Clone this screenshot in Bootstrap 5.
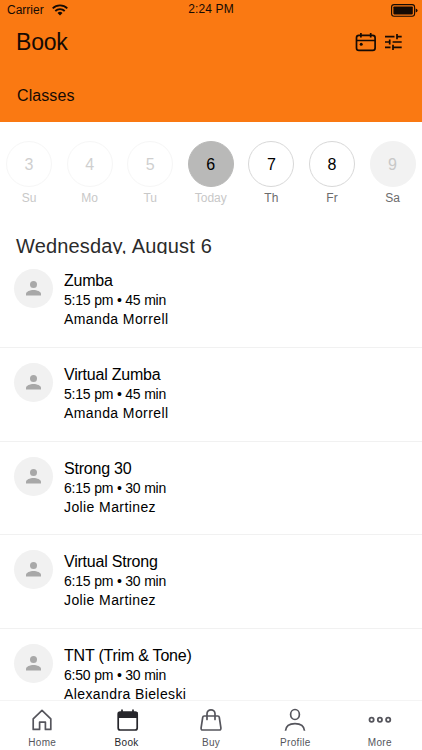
<!DOCTYPE html>
<html lang="en">
<head>
<meta charset="utf-8">
<meta name="viewport" content="width=device-width, initial-scale=1">
<title>Book</title>
<link href="https://cdn.jsdelivr.net/npm/bootstrap@5.3.0/dist/css/bootstrap.min.css" rel="stylesheet">
<style>
body{font-family:"Liberation Sans",Arial,sans-serif;color:#000;background:#fff}
svg{display:block;flex:none}
.screen{height:750px}
.top-area{height:122px;background:#fa7912;color:#140a04}
.status-bar{height:20px;display:grid;grid-template-columns:1fr auto 1fr;font-size:12px;line-height:20px;padding:0 4px 0 7px}
.clock{margin:-1px 3px 0 0;letter-spacing:.12px}
.app-title{font-size:23px;line-height:28px;letter-spacing:-.2px;padding-left:16px}
.head-icons{padding-right:3px}
.tab-title{font-size:16px;line-height:20px;padding:30px 0 0 17px;letter-spacing:.08px}
.days{display:grid;grid-template-columns:repeat(7,60.6px);padding:19px 0 0 .4px;margin-left:-1.7px;height:110px}
.day-num{width:46px;height:46px;border:1px solid #d8d8d8;font-size:16px;padding-top:1px}
.day-label{font-size:12px;line-height:14px;margin-top:4px;color:#6c6c6c}
.off .day-num{color:#cfcfcf;border-color:#f6f6f6}
.off .day-label,.today .day-label{color:#c8c8c8}
.today .day-num{background:#b9b9b8;border-color:#b9b9b8}
.closed .day-num{background:#f2f2f2;border-color:#f2f2f2;color:#c8c8c8}
.date-head{height:22px;padding-left:16px;font-size:20px;line-height:29px;letter-spacing:.17px;color:#2b2b2b}
.class-row{height:93.75px;flex:none;padding:15px 14px 0;border-bottom:1px solid #f1f1f1}
.avatar{width:39px;height:39px;background:#f1f1f1}
.class-text{margin:2px 0 0 11px}
.class-name{font-size:16px;line-height:20px;letter-spacing:-.22px}
.class-meta{font-size:14px;line-height:19px;letter-spacing:-.2px}
.class-staff{font-size:14px;line-height:19px;letter-spacing:.4px}
.tab-bar{height:50px;border-top:1px solid #f4f4f4;display:grid;grid-template-columns:repeat(5,1fr);color:#55555c;background:#fff}
.tab-item{font-size:10px;line-height:12px;letter-spacing:.32px;padding-top:7px}
.tab-item span{margin-top:5px}
.tab-item.current{color:#26262b}
</style>
<script src="https://cdn.jsdelivr.net/npm/bootstrap@5.3.0/dist/js/bootstrap.bundle.min.js"></script>
</head>
<body>
<div class="screen d-flex flex-column overflow-hidden">
<header class="top-area flex-shrink-0">
  <div class="status-bar">
    <div class="d-flex align-items-center"><span>Carrier</span>
      <svg class="ms-2" width="16" height="12" viewBox="0 0 16 12" fill="none" stroke="#140a04" stroke-width="1.8"><path d="M.7 4.3a10.4 10.4 0 0 1 14.6 0M3.3 7a6.7 6.7 0 0 1 9.4 0"/><path d="M8 11.5 5.5 9a3.6 3.6 0 0 1 5 0z" fill="#140a04" stroke="none"/></svg>
    </div>
    <div class="clock">2:24 PM</div>
    <svg class="ms-auto align-self-center" width="27" height="13" viewBox="0 0 27 13"><rect x=".6" y=".6" width="23" height="11.6" rx="2.5" fill="none" stroke="#140a04" stroke-width="1.1"/><rect x="2.4" y="2.4" width="19.4" height="8" rx=".8" fill="#140a04"/><path d="M24.7 4.4q1.9.4 1.9 2t-1.9 2z" fill="#140a04"/></svg>
  </div>
  <div class="d-flex align-items-center justify-content-between pe-3 pt-2">
    <h1 class="app-title fw-normal m-0">Book</h1>
    <div class="head-icons d-flex align-items-center">
      <svg width="22" height="20" viewBox="0 0 22 20" fill="none" stroke="#140a04" stroke-width="1.7"><rect x="1.5" y="3.3" width="18.6" height="15" rx="2.4"/><path d="M1.5 8.5h18.6M5.9 1v4.5M15.7 1v4.5"/><circle cx="6.2" cy="12.2" r="1.5" fill="#140a04" stroke="none"/></svg>
      <svg class="ms-2" width="18" height="18" viewBox="0 0 18 18" fill="none" stroke="#140a04" stroke-width="1.7"><path d="M0 3.6h9.5M11.7 3.6h5M12 1v5.2M0 9h4.8M7.6 9h9.1M4.7 6.4v5.2M0 14.4h5.5M8 14.4h8.7M8 11.8V17"/></svg>
    </div>
  </div>
  <div class="tab-title">Classes</div>
</header>
<section class="days flex-shrink-0 text-center">
  <div class="off"><div class="day-num rounded-circle d-flex align-items-center justify-content-center mx-auto">3</div><div class="day-label">Su</div></div>
  <div class="off"><div class="day-num rounded-circle d-flex align-items-center justify-content-center mx-auto">4</div><div class="day-label">Mo</div></div>
  <div class="off"><div class="day-num rounded-circle d-flex align-items-center justify-content-center mx-auto">5</div><div class="day-label">Tu</div></div>
  <div class="today"><div class="day-num rounded-circle d-flex align-items-center justify-content-center mx-auto">6</div><div class="day-label">Today</div></div>
  <div><div class="day-num rounded-circle d-flex align-items-center justify-content-center mx-auto">7</div><div class="day-label">Th</div></div>
  <div><div class="day-num rounded-circle d-flex align-items-center justify-content-center mx-auto">8</div><div class="day-label">Fr</div></div>
  <div class="closed"><div class="day-num rounded-circle d-flex align-items-center justify-content-center mx-auto">9</div><div class="day-label">Sa</div></div>
</section>
<h2 class="date-head fw-normal m-0 overflow-hidden flex-shrink-0">Wednesday, August 6</h2>
<svg width="0" height="0" class="d-none"><symbol id="person" viewBox="0 0 15 15"><circle cx="7.5" cy="3.6" r="3.5"/><path d="M0 14.6v-1.8c0-2.3 4-3.9 7.5-3.9s7.5 1.6 7.5 3.9v1.8z"/></symbol></svg>
<main class="d-flex flex-column flex-grow-1 overflow-hidden">
  <article class="class-row d-flex"><div class="avatar rounded-circle d-flex align-items-center justify-content-center"><svg width="15" height="15" fill="#a8a8a8"><use href="#person"/></svg></div><div class="class-text"><div class="class-name">Zumba</div><div class="class-meta">5:15 pm • 45 min</div><div class="class-staff">Amanda Morrell</div></div></article>
  <article class="class-row d-flex"><div class="avatar rounded-circle d-flex align-items-center justify-content-center"><svg width="15" height="15" fill="#a8a8a8"><use href="#person"/></svg></div><div class="class-text"><div class="class-name">Virtual Zumba</div><div class="class-meta">5:15 pm • 45 min</div><div class="class-staff">Amanda Morrell</div></div></article>
  <article class="class-row d-flex"><div class="avatar rounded-circle d-flex align-items-center justify-content-center"><svg width="15" height="15" fill="#a8a8a8"><use href="#person"/></svg></div><div class="class-text"><div class="class-name">Strong 30</div><div class="class-meta">6:15 pm • 30 min</div><div class="class-staff">Jolie Martinez</div></div></article>
  <article class="class-row d-flex"><div class="avatar rounded-circle d-flex align-items-center justify-content-center"><svg width="15" height="15" fill="#a8a8a8"><use href="#person"/></svg></div><div class="class-text"><div class="class-name">Virtual Strong</div><div class="class-meta">6:15 pm • 30 min</div><div class="class-staff">Jolie Martinez</div></div></article>
  <article class="class-row d-flex"><div class="avatar rounded-circle d-flex align-items-center justify-content-center"><svg width="15" height="15" fill="#a8a8a8"><use href="#person"/></svg></div><div class="class-text"><div class="class-name">TNT (Trim &amp; Tone)</div><div class="class-meta">6:50 pm • 30 min</div><div class="class-staff">Alexandra Bieleski</div></div></article>
</main>
<nav class="tab-bar flex-shrink-0">
  <div class="tab-item d-flex flex-column align-items-center"><svg width="24" height="24" viewBox="0 0 24 24" fill="none" stroke="currentColor" stroke-width="1.7" stroke-linejoin="round"><path d="M3.2 10.8 12 2.3l8.8 8.5v10.6h-5.4v-7.2H9.6v7.2H3.2z"/></svg><span>Home</span></div>
  <div class="tab-item current d-flex flex-column align-items-center"><svg width="24" height="24" viewBox="0 0 24 24" fill="none" stroke="currentColor" stroke-width="1.7"><rect x="3.2" y="4.2" width="19" height="17.8" rx="2"/><path d="M3 4h19.5v6H3z" fill="currentColor" stroke="none"/><path d="M7 1.5V5M18 1.5V5"/></svg><span>Book</span></div>
  <div class="tab-item d-flex flex-column align-items-center"><svg width="24" height="24" viewBox="0 0 24 24" fill="none" stroke="currentColor" stroke-width="1.7" stroke-linejoin="round" stroke-linecap="round"><path d="M5.2 8h13.6q1.3 0 1.5 1.3l1.6 10.5q.2 2.2-1.6 2.2H3.7q-1.8 0-1.6-2.2L3.7 9.3Q3.9 8 5.2 8z"/><path d="M8 11.5V5.8a4 4 0 0 1 8 0v5.7"/></svg><span>Buy</span></div>
  <div class="tab-item d-flex flex-column align-items-center"><svg width="24" height="24" viewBox="0 0 24 24" fill="none" stroke="currentColor" stroke-width="1.7"><ellipse cx="12" cy="6.5" rx="4.4" ry="5"/><path d="M2.5 22.8c.4-4.8 3.5-7.2 9.5-7.2s9.1 2.4 9.5 7.2"/></svg><span>Profile</span></div>
  <div class="tab-item d-flex flex-column align-items-center"><svg width="24" height="24" viewBox="0 0 24 24" fill="none" stroke="currentColor" stroke-width="1.8"><circle cx="3.6" cy="11.8" r="2.1"/><circle cx="11.9" cy="11.8" r="2.1"/><circle cx="20.2" cy="11.8" r="2.1"/></svg><span>More</span></div>
</nav>
</div>
</body>
</html>
